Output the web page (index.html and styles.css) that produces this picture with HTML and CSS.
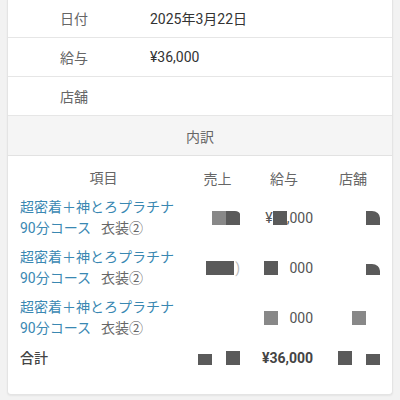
FILE: index.html
```html
<!DOCTYPE html>
<html lang="ja">
<head>
<meta charset="utf-8">
<link rel="stylesheet" href="styles.css">
</head>
<body>
<div class="card">
  <div class="info-row"><div class="label">日付</div><div class="value">2025年3月22日</div></div>
  <div class="info-row"><div class="label">給与</div><div class="value">¥36,000</div></div>
  <div class="info-row"><div class="label">店舗</div><div class="value"></div></div>
  <div class="section">内訳</div>
  <div class="table">
    <div class="trow thead">
      <div class="c1 center">項目</div>
      <div class="c2 center">売上</div>
      <div class="c3 center">給与</div>
      <div class="c4 center">店舗</div>
    </div>
    <div class="trow item">
      <div class="c1"><span class="link">超密着＋神とろプラチナ<br>90分コース</span><span class="opt">衣装②</span></div>
      <div class="c2 num"><span class="blk lt w14"></span><span class="blk cut w14"></span></div>
      <div class="c3 num">¥<span class="blk w14"></span>,000</div>
      <div class="c4 num"><span class="blk round w14"></span></div>
    </div>
    <div class="trow item">
      <div class="c1"><span class="link">超密着＋神とろプラチナ<br>90分コース</span><span class="opt">衣装②</span></div>
      <div class="c2 num"><span class="blk w28"></span><span class="faint">)</span></div>
      <div class="c3 num"><span class="blk w14"></span><span class="gap"></span>000</div>
      <div class="c4 num"><span class="blk round w14 short"></span></div>
    </div>
    <div class="trow item">
      <div class="c1"><span class="link">超密着＋神とろプラチナ<br>90分コース</span><span class="opt">衣装②</span></div>
      <div class="c2 num"></div>
      <div class="c3 num"><span class="blk lt w14"></span><span class="gap"></span>000</div>
      <div class="c4 num"><span class="blk lt w14"></span><span class="gap14"></span></div>
    </div>
    <div class="trow total">
      <div class="c1 tlabel">合計</div>
      <div class="c2 num"><span class="blk w14 short"></span><span class="gap14"></span><span class="blk w14"></span></div>
      <div class="c3 num bold">¥36,000</div>
      <div class="c4 num"><span class="blk w14"></span><span class="gap14"></span><span class="blk w14 short"></span></div>
    </div>
  </div>
</div>
</body>
</html>
```
FILE: styles.css
```css
html, body {
  margin: 0;
  padding: 0;
}
body {
  background: #f2f2f2;
  font-family: Roboto, "Noto Sans CJK JP", sans-serif;
  font-size: 14px;
  color: #333;
  width: 400px;
  height: 400px;
  overflow: hidden;
}
.card {
  margin: -1px 7px 0 7px;
  background: #fff;
  border: 1px solid #e4e4e4;
  border-top: none;
  border-radius: 0 0 4px 4px;
  box-shadow: 0 1px 2px rgba(0,0,0,0.06);
  padding-bottom: 21px;
}
.info-row {
  display: flex;
  align-items: center;
  height: 38px;
  border-bottom: 1px solid #e6e6e6;
}
.label {
  width: 142px;
  padding-left: 52px;
  box-sizing: border-box;
  color: #666;
}
.value {
  color: #333;
}
.section {
  height: 39px;
  display: flex;
  align-items: center;
  justify-content: center;
  background: #f5f5f5;
  border-bottom: 1px solid #e2e2e2;
  color: #666;
}
.table {
  padding: 7px 6px 0 5px;
}
.trow {
  display: grid;
  grid-template-columns: 174px 61px 72px 66px;
  align-items: center;
}
.thead {
  height: 30px;
  color: #666;
}
.item {
  height: 50px;
}
.total {
  height: 30px;
}
.center {
  text-align: center;
}
.c1 {
  padding-left: 7px;
  line-height: 21px;
}
.c2 { padding-right: 8px; }
.c3 { padding-right: 7px; }
.c4 { padding-right: 6px; }
.num {
  text-align: right;
  color: #555;
  line-height: 21px;
  white-space: nowrap;
}
.thead .c2, .thead .c3, .thead .c4 {
  padding-right: 0;
}
.link {
  color: #3a88b2;
}
.opt {
  color: #666;
  margin-left: 10px;
}
.tlabel {
  color: #444;
  font-weight: 500;
}
.bold {
  font-weight: 700;
  color: #444;
}
.blk {
  display: inline-block;
  height: 14px;
  background: #5a5a5a;
  vertical-align: -2px;
}
.blk.lt { background: #888; }
.blk.cut { border-top-right-radius: 5px 3px; }
.blk.round { border-top-right-radius: 8px 7px; }
.blk.short { height: 11px; }
.w14 { width: 14px; }
.w28 { width: 28px; }
.gap { display: inline-block; width: 11px; }
.gap14 { display: inline-block; width: 14px; }
.faint { color: #bbb; margin-left: 1px; }
```
